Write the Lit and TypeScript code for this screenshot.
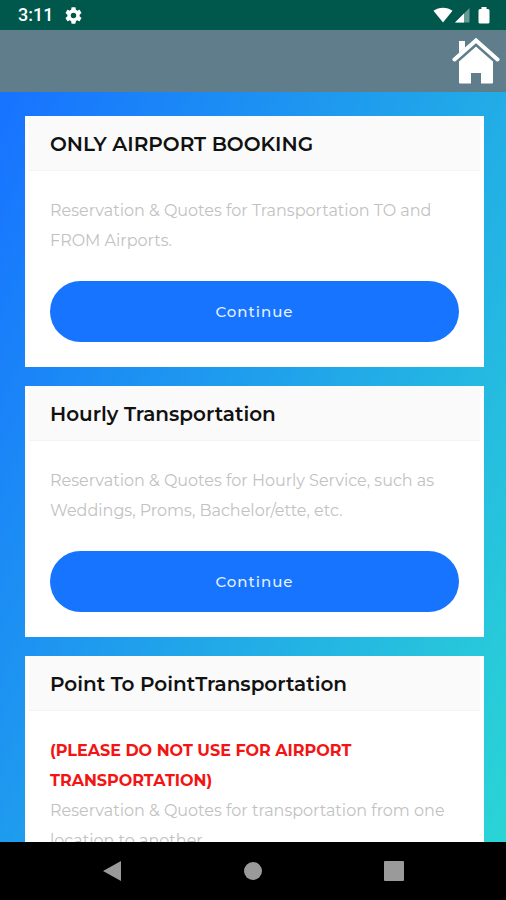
import { LitElement, html, css, nothing } from "lit";
import { customElement, property } from "lit/decorators.js";

interface Service {
  title: string;
  warning?: string;
  text: string;
}

const services: Service[] = [
  {
    title: "ONLY AIRPORT BOOKING",
    text: "Reservation & Quotes for Transportation TO and FROM Airports.",
  },
  {
    title: "Hourly Transportation",
    text: "Reservation & Quotes for Hourly Service, such as Weddings, Proms, Bachelor/ette, etc.",
  },
  {
    title: "Point To PointTransportation",
    warning: "(PLEASE DO NOT USE FOR AIRPORT TRANSPORTATION)",
    text: "Reservation & Quotes for transportation from one location to another.",
  },
];

@customElement("status-bar")
class StatusBar extends LitElement {
  static styles = css`
    :host {
      display: flex;
      align-items: center;
      height: 30px;
      padding: 0 16px 0 18px;
      box-sizing: border-box;
      background: #00574b;
      color: #fff;
      font: 500 18px/30px Roboto, sans-serif;
    }
    .gear {
      margin-left: 12px;
    }
    .signals {
      display: flex;
      align-items: center;
      margin-left: auto;
    }
    svg {
      display: block;
      fill: #fff;
    }
    .battery {
      margin-left: 8px;
    }
    .cell {
      margin-left: 2px;
    }
  `;

  render() {
    return html`
      <span>3:11</span>
      <svg class="gear" width="17" height="17" viewBox="2 2 20 20" aria-hidden="true">
        <path
          d="M19.14 12.94c.04-.3.06-.61.06-.94 0-.32-.02-.64-.07-.94l2.03-1.58c.18-.14.23-.41.12-.61l-1.92-3.32c-.12-.22-.37-.29-.59-.22l-2.39.96c-.5-.38-1.03-.7-1.62-.94l-.36-2.54c-.04-.24-.24-.41-.48-.41h-3.84c-.24 0-.43.17-.47.41l-.36 2.54c-.59.24-1.13.57-1.62.94l-2.39-.96c-.22-.08-.47 0-.59.22L2.74 8.87c-.12.21-.08.47.12.61l2.03 1.58c-.05.3-.09.63-.09.94s.02.64.07.94l-2.03 1.58c-.18.14-.23.41-.12.61l1.92 3.32c.12.22.37.29.59.22l2.39-.96c.5.38 1.03.7 1.62.94l.36 2.54c.05.24.24.41.48.41h3.84c.24 0 .44-.17.47-.41l.36-2.54c.59-.24 1.13-.56 1.62-.94l2.39.96c.22.08.47 0 .59-.22l1.92-3.32c.12-.22.07-.47-.12-.61l-2.01-1.58zM12 15.2a3.2 3.2 0 1 1 0-6.4 3.2 3.2 0 0 1 0 6.4z"
        />
      </svg>
      <div class="signals">
        <svg width="20" height="16" viewBox="0 0 20 16" aria-hidden="true">
          <path d="M.5 3.8C6-.4 14-.4 19.5 3.800L10 15.400z" />
        </svg>
        <svg class="cell" width="15" height="16" viewBox="0 0 15 16" aria-hidden="true">
          <path d="M0 15.500L14.500 1V15.500z" opacity=".4" />
          <path d="M0 15.500L9 6.500V15.500z" />
        </svg>
        <svg class="battery" width="12" height="18" viewBox="0 0 12 18" aria-hidden="true">
          <path d="M3.500 1h5v2H10q1.500 0 1.500 1.500V16q0 1.500-1.500 1.500H2Q.5 17.500.5 16V4.500Q.5 3 2 3h1.500z" />
        </svg>
      </div>
    `;
  }
}

@customElement("service-card")
class ServiceCard extends LitElement {
  @property({ attribute: false }) service!: Service;

  static styles = css`
    :host {
      display: block;
      background: #fff;
      padding: 0 4px;
    }
    .title {
      margin: 0;
      padding: 2px 21px 0;
      background: #fafafa;
      border-bottom: 1px solid #f4f4f4;
      color: #111;
      font-size: 20px;
      font-weight: 600;
      line-height: 52px;
    }
    .body {
      padding: 25px 21px;
      font-size: 16px;
      line-height: 30px;
    }
    .text {
      margin: 0;
      color: #c2c2c2;
      font-weight: 400;
    }
    .warning {
      display: block;
      color: #f31414;
      font-weight: 700;
    }
    .go {
      display: block;
      width: 100%;
      height: 61px;
      margin-top: 25px;
      border: 0;
      border-radius: 31px;
      background: #1774ff;
      color: #e6f0ff;
      font: inherit;
      font-size: 15px;
      font-weight: 500;
      letter-spacing: 1px;
    }
  `;

  render() {
    const { title, warning, text } = this.service;
    return html`
      <h2 class="title">${title}</h2>
      <div class="body">
        <p class="text">
          ${warning ? html`<strong class="warning">${warning}</strong>` : nothing}${text}
        </p>
        <button class="go" type="button">Continue</button>
      </div>
    `;
  }
}

@customElement("app-root")
class AppRoot extends LitElement {
  static styles = css`
    :host {
      display: flex;
      flex-direction: column;
      height: 100vh;
      font-family: Montserrat, Inter, sans-serif;
    }
    status-bar,
    .top,
    .keys {
      flex: none;
    }
    .top {
      display: flex;
      justify-content: flex-end;
      align-items: center;
      height: 62px;
      padding: 0 6px;
      box-sizing: border-box;
      background: #607d8b;
    }
    .home svg {
      display: block;
      fill: #fff;
    }
    .list {
      flex: 1;
      min-height: 0;
      overflow: hidden;
      display: flex;
      flex-direction: column;
      gap: 19px;
      padding: 24px 22px 24px 25px;
      background: linear-gradient(115deg, #1774ff 2%, #2ad5d5 100%);
    }
    .list service-card {
      flex: none;
    }
    .keys {
      display: grid;
      grid-template-columns: repeat(3, 1fr);
      height: 58px;
      padding: 0 42px;
      background: #000;
    }
    .key {
      display: flex;
      align-items: center;
      justify-content: center;
      padding: 0;
      border: 0;
      background: none;
    }
    .key svg {
      fill: #9a9a9a;
    }
  `;

  render() {
    return html`
      <status-bar></status-bar>
      <header class="top">
        <a class="home" href="#" aria-label="Home">
          <svg width="48" height="48" viewBox="0 0 48 48" aria-hidden="true">
            <path d="M7 4h6v7l-6 6z" />
            <path d="M24 9.500L41 24.500V45.500q0 1-1 1H29V36H19V46.500H8q-1 0-1-1V24.500z" />
            <path
              d="M2.500 24L24 5L45.500 24"
              fill="none"
              stroke="#607d8b"
              stroke-width="6"
            />
            <path
              d="M2.500 22.500L24 3.500L45.500 22.500"
              fill="none"
              stroke="#fff"
              stroke-width="4"
              stroke-linecap="round"
            />
          </svg>
        </a>
      </header>
      <main class="list">
        ${services.map((s) => html`<service-card .service=${s}></service-card>`)}
      </main>
      <nav class="keys" aria-label="System">
        <button class="key" type="button" aria-label="Back">
          <svg width="20" height="22" viewBox="0 0 20 22"><path d="M1 11L19 1V21z" /></svg>
        </button>
        <button class="key" type="button" aria-label="Home screen">
          <svg width="20" height="20" viewBox="0 0 20 20"><circle cx="10" cy="10" r="9" /></svg>
        </button>
        <button class="key" type="button" aria-label="Recent apps">
          <svg width="20" height="20" viewBox="0 0 20 20"><rect width="20" height="20" rx="1" /></svg>
        </button>
      </nav>
    `;
  }
}
